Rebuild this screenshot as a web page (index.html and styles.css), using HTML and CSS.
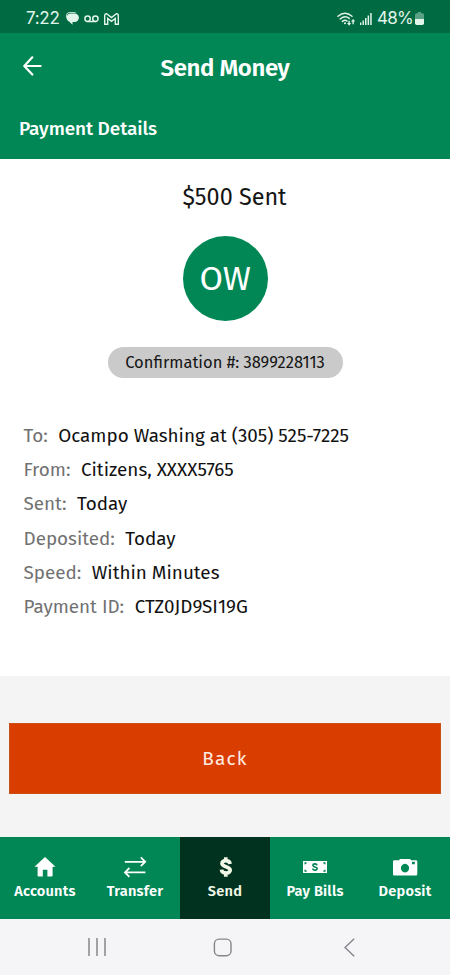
FILE: index.html
```html
<!DOCTYPE html>
<html lang="en">
<head>
<meta charset="utf-8">
<meta name="viewport" content="width=device-width">
<title>Send Money</title>
<link rel="stylesheet" href="styles.css">
</head>
<body>
<div class="status">
  <div class="status-left">
    <span class="time">7:22</span>
    <svg class="i-chat" width="14" height="13" viewBox="0 0 14 13"><path d="M4 0h5a4 4 0 0 1 2.6 1.1H5A3 3 0 0 0 2 4.2v2.5A4 4 0 0 1 4 0z" opacity=".8"/><path d="M5.7 1.6h4a4.2 4.2 0 0 1 0 8.4H7.5v2.8L4.3 9.7A4.2 4.2 0 0 1 5.7 1.6z"/></svg>
    <svg class="i-vm" width="15" height="8" viewBox="0 0 15 8"><g fill="none" stroke="currentColor" stroke-width="1.5"><circle cx="3.6" cy="3.7" r="2.7"/><circle cx="11.4" cy="3.7" r="2.7"/><path d="M3.6 6.5h7.8"/></g></svg>
    <svg width="15" height="12" viewBox="0 0 15 12"><path d="M.7 11.2V2.4Q.9.7 2.6.8L7.5 4.6 12.4.8q1.7-.1 1.9 1.6v8.8h-3V5.4L7.5 8.3 3.7 5.4v5.8z" fill="none" stroke="currentColor" stroke-width="1.4"/></svg>
  </div>
  <div class="status-right">
    <svg width="19" height="14" viewBox="0 0 19 14"><g fill="none" stroke="currentColor" stroke-width="1.5" stroke-linecap="round"><path d="M1 4.2Q8-1.8 15 4.2M3.2 7Q8 2.8 12.2 6.4M5.4 9.4Q8 7.2 10 9"/></g><circle cx="8" cy="11.2" r="1"/><path d="M11.4 8.8h1.4v2.3h1.4l-2.1 2.6-2.1-2.6h1.4zM15.4 12.2h1.4V9.5h1.4l-2.1-2.6L14 9.5h1.4z"/></svg>
    <svg class="i-sig" width="12" height="12" viewBox="0 0 12 12"><path d="M0 9.4h1.4V12H0zM2.5 7.4h1.4V12H2.5zM5 5h1.5v7H5zM7.6 2.4h1.5V12H7.6zM10.2 0h1.5v12h-1.5z"/></svg>
    <span class="pct">48%</span>
    <svg width="9" height="13" viewBox="0 0 9 13"><path d="M3 0h3v1.2h1.5Q9 1.2 9 2.7V7H0V2.7q0-1.5 1.5-1.5H3z" opacity=".4"/><path d="M0 7h9v4.2Q9 13 7.3 13H1.7Q0 13 0 11.2z"/></svg>
  </div>
</div>
<header class="header">
  <div class="bar">
    <svg class="back-arrow" width="19" height="20" viewBox="0 0 19 20"><path d="M9.3 1.3 1.3 10l8 8.5M1.6 10H17.6" fill="none" stroke="currentColor" stroke-width="2.2" stroke-linecap="round" stroke-linejoin="round"/></svg>
    <h1 class="title">Send Money</h1>
  </div>
  <h2 class="subtitle">Payment Details</h2>
</header>
<main class="card">
  <div class="amount">$500 Sent</div>
  <div class="avatar">OW</div>
  <div class="confirm">Confirmation #: 3899228113</div>
  <dl class="details">
    <div class="row"><dt>To:</dt><dd>Ocampo Washing at (305) 525-7225</dd></div>
    <div class="row"><dt>From:</dt><dd>Citizens, XXXX5765</dd></div>
    <div class="row"><dt>Sent:</dt><dd>Today</dd></div>
    <div class="row"><dt>Deposited:</dt><dd>Today</dd></div>
    <div class="row"><dt>Speed:</dt><dd>Within Minutes</dd></div>
    <div class="row"><dt>Payment ID:</dt><dd>CTZ0JD9SI19G</dd></div>
  </dl>
</main>
<section class="actions"><button class="back">Back</button></section>
<nav class="tabs">
  <a class="tab"><svg width="24" height="24" viewBox="0 0 24 24"><path d="M12 2 22.5 11.8H19.6V20.5Q19.6 21.5 18.6 21.5H14.4V14.8H9.8V21.5H5.6Q4.6 21.5 4.6 20.5V11.8H1.5z"/></svg><span>Accounts</span></a>
  <a class="tab"><svg width="24" height="24" viewBox="0 0 24 24"><path d="M1.8 6.8H22M17.8 2.4 22.2 6.8 17.8 11.2M22.4 17.4H2.2M6.4 13 2 17.4 6.4 21.8" fill="none" stroke="currentColor" stroke-width="1.8"/></svg><span>Transfer</span></a>
  <a class="tab active"><svg width="24" height="24" viewBox="0 0 24 24"><path d="M17 9C16.6 4.7 9 4.6 9 8.6 9 12.4 17.2 11 17.2 15.2 17.2 19.2 8.9 19.2 8.5 14.6M12.8 2.2V6M12.8 18V21.8" fill="none" stroke="currentColor" stroke-width="3.7"/></svg><span>Send</span></a>
  <a class="tab"><svg width="24" height="24" viewBox="0 0 24 24"><path fill-rule="evenodd" d="M0 6h24v12H0zM1.5 7.2v2.4q2 0 2.4-2.4zM22.5 7.2v2.4q-2 0-2.4-2.4zM1.5 16.8v-2.4q2 0 2.4 2.4zM22.5 16.8v-2.4q-2 0-2.4 2.4z"/><path class="cut" d="M14 10.3C13.8 8.4 10 8.4 10 10.4 10 12.5 14.2 11.5 14.2 13.6 14.2 15.7 9.9 15.6 9.8 13.5M12 8.2V9.5M12 14.5V16" fill="none" stroke-width="1.6"/></svg><span>Pay Bills</span></a>
  <a class="tab"><svg width="26" height="24" viewBox="0 0 26 24"><path fill-rule="evenodd" d="M7 5.2 8 4h10l1.2 1.2H24Q25.3 5.2 25.3 6.5V19.2Q25.3 20.5 24 20.5H2.3Q1 20.5 1 19.2V6.5Q1 5.2 2.3 5.2zM13 8.8a4.1 4.3 0 1 0 .01 0zM20 6.8v2.4h2.8V6.8z"/></svg><span>Deposit</span></a>
</nav>
<footer class="sysnav">
  <svg width="18" height="18" viewBox="0 0 18 18"><path d="M1 0v18M9 0v18M17 0v18" fill="none" stroke="currentColor" stroke-width="1.5"/></svg>
  <svg class="home" width="20" height="19" viewBox="0 0 20 19"><rect x="1.4" y="1.1" width="16.6" height="16.6" rx="4.8" fill="none" stroke="currentColor" stroke-width="1.4"/></svg>
  <svg width="11" height="19" viewBox="0 0 11 19"><path d="M10.2.7 1 9.5l9.2 8.8" fill="none" stroke="currentColor" stroke-width="1.4"/></svg>
</footer>
</body>
</html>
```
FILE: styles.css
```css
* { box-sizing: border-box; margin: 0; padding: 0; }
body {
  width: 450px; height: 975px; overflow: hidden;
  display: flex; flex-direction: column;
  background: #f4f4f4; color: #151515;
  font-family: "Fira Sans", "Noto Sans", sans-serif;
  white-space: nowrap;
}
svg { display: block; flex: none; fill: currentColor; }
.status {
  height: 33px; padding: 4px 26px 0 26px;
  display: flex; justify-content: space-between;
  background: #006a43; color: #e2f5ea;
  font: 17px/29px Inter, sans-serif;
}
.status-left, .status-right { display: flex; align-items: center; }
.time { width: 39px; letter-spacing: -.3px; }
.i-chat { margin-right: 5px; }
.i-vm { margin-right: 5px; }
.i-sig { margin: 0 5px 0 4px; }
.pct { width: 38px; letter-spacing: -.7px; }
.header { height: 126px; background: #008755; color: #fff; }
.bar { height: 66px; position: relative; display: flex; align-items: center; justify-content: center; }
.back-arrow { position: absolute; left: 23px; top: 23px; }
.title { font-size: 24px; font-weight: 600; line-height: 30px; padding-top: 3px; letter-spacing: -.4px; }
.subtitle { padding: 17px 0 0 19px; font-size: 19px; font-weight: 500; line-height: 26px; letter-spacing: -.1px; }
.card { height: 517px; background: #fff; display: flex; flex-direction: column; align-items: center; }
.amount { margin-top: 22px; height: 32px; padding-left: 19px; line-height: 32px; font-size: 23.4px; }
.avatar {
  width: 85px; height: 85px; margin-top: 23px; border-radius: 50%;
  display: flex; align-items: center; justify-content: center;
  background: #008755; color: #fff; font-size: 34px; letter-spacing: -.3px;
}
.confirm {
  width: 235px; height: 31px; margin-top: 26px; border-radius: 16px;
  background: #cacaca; text-align: center; font-size: 16.5px; line-height: 31px;
}
.details { align-self: stretch; margin-top: 41px; padding-left: 23.5px; }
.row { height: 34.2px; display: flex; gap: 10.5px; font-size: 18.85px; line-height: 34.2px; }
dt { color: #717171; }
dd { color: #111; }
.actions { height: 161px; padding: 47px 9px 0; }
.back {
  display: block; width: 100%; height: 71px; border: 1px solid #c75016;
  background: #d93d00; color: #ffece0; font: 19px/68px "Fira Sans", "Noto Sans", sans-serif; letter-spacing: 1.2px;
}
.tabs { height: 82px; display: flex; background: #008755; color: #fff; }
.tab { width: 90px; padding-top: 18px; display: flex; flex-direction: column; align-items: center; font-size: 14.6px; font-weight: 600; line-height: 25px; letter-spacing: .2px; }
.active { background: #013220; color: #f0f7e5; }
.cut { stroke: #008755; }
.sysnav { height: 56px; padding: 0 95px 0 88px; display: flex; align-items: center; justify-content: space-between; background: #f5f5f8; color: #85858a; }
.home { margin-right: 4px; }
```
